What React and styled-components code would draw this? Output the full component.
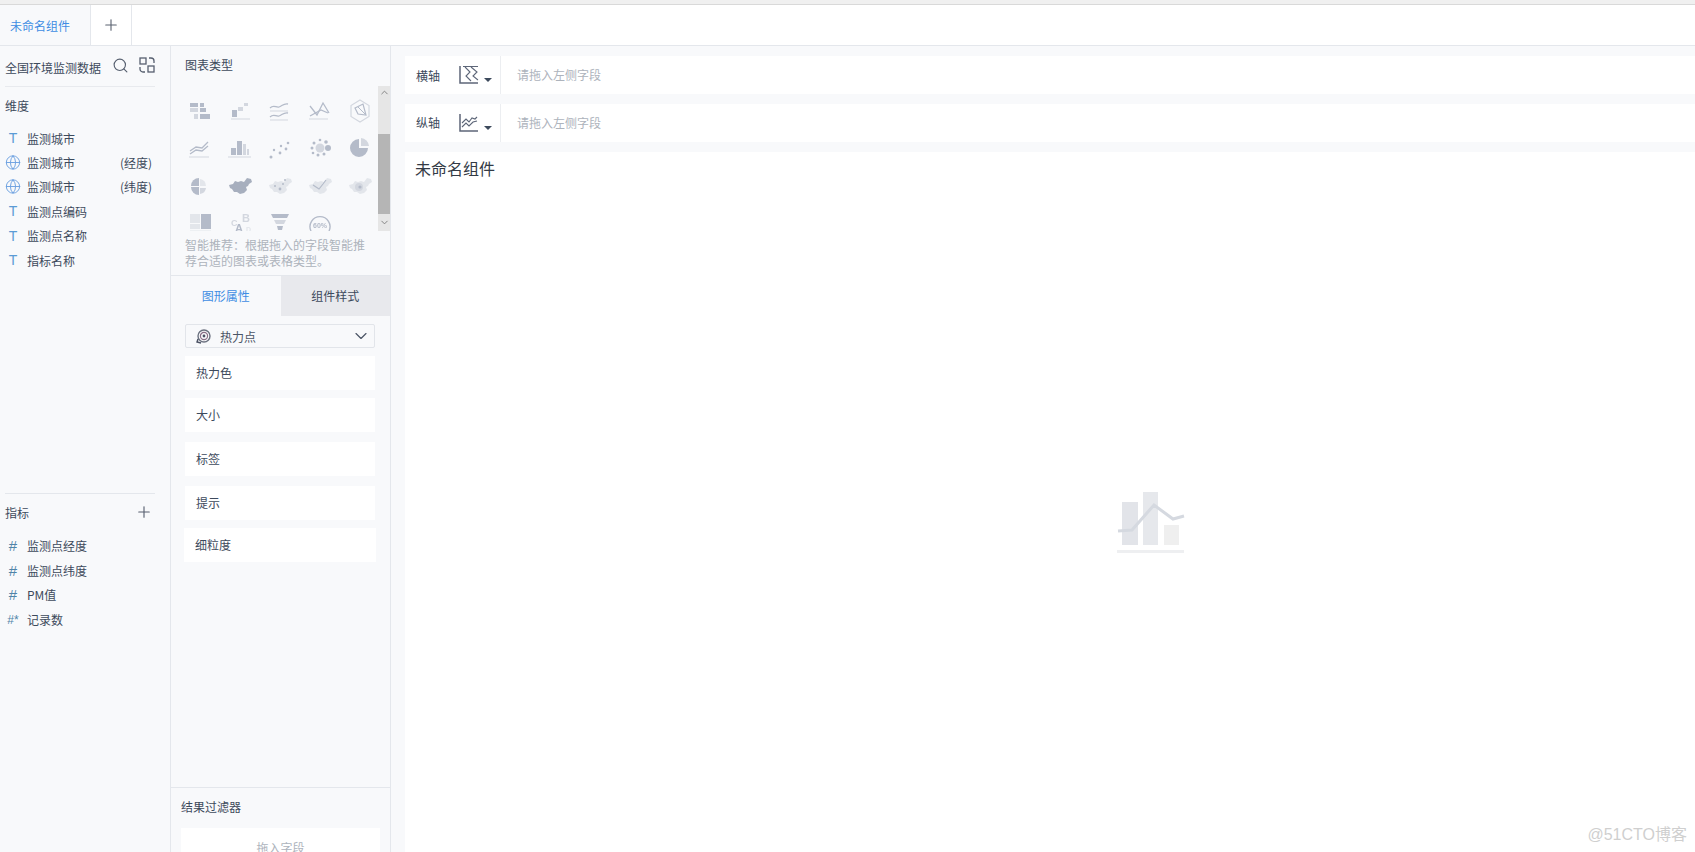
import React from "react";
import styled, { createGlobalStyle } from "styled-components";
import { Search, Globe, Plus, ChevronDown, ChevronUp } from "lucide-react";

const Global = createGlobalStyle`
  html, body { margin: 0; padding: 0; height: 100%; overflow: hidden; background: #fff; }
  body { font-family: "Noto Sans CJK SC", "Noto Sans", sans-serif; font-size: 12px; color: #3d4a5c; }
  * { box-sizing: border-box; }
`;

const Page = styled.div`
  width: 1695px; height: 852px; display: flex; flex-direction: column; overflow: hidden; position: relative;
`;
const TopStrip = styled.div`
  height: 5px; flex: none; background: #f0f0f0; border-bottom: 1px solid #d9d9d9;
`;
const TabBar = styled.div`
  height: 41px; flex: none; display: flex; background: #fff; border-bottom: 1px solid #e4e7ec;
`;
const Tab = styled.div`
  width: 91px; display: flex; align-items: center; padding-left: 10px; background: #f8f9fb;
  color: #3f8de3; border-right: 1px solid #e4e7ec;
`;
const AddTab = styled.div`
  width: 41px; display: flex; align-items: center; justify-content: center; color: #5b6270;
  border-right: 1px solid #e4e7ec;
`;
const Body = styled.div`
  flex: 1; min-height: 0; display: flex; background: #f8f9fb;
`;
const Left = styled.aside`
  width: 171px; flex: none; border-right: 1px solid #e4e7ec; display: flex; flex-direction: column;
`;
const DataHead = styled.div`
  height: 41px; margin: 0 15px 0 5px; flex: none; display: flex; align-items: center; justify-content: space-between;
  border-bottom: 1px solid #e8eaee; padding-top: 3px;
`;
const HeadIcons = styled.div`
  display: flex; align-items: center; gap: 10px; color: #565f6f; margin-top: -5px;
`;
const FieldSection = styled.section`
  height: ${p => p.$h}px; flex: none; padding-left: 5px;
`;
const SectionTitle = styled.div`
  height: 36px; display: flex; align-items: center; justify-content: space-between; padding-right: 17px;
  color: #3d4a5c;
`;
const FieldList = styled.div`
  padding-top: 3px;
`;
const FieldRow = styled.div`
  height: ${p => p.$h}px; display: flex; align-items: center; color: #3d4a5c; padding-right: 18px;
`;
const TypeMark = styled.span`
  width: 22px; flex: none; display: flex; justify-content: center; padding-right: 6px;
  font-family: "Liberation Sans", sans-serif; font-size: ${p => p.$size || 14}px; line-height: 1; color: ${p => p.$color};
`;
const FieldName = styled.span`
  flex: 1;
`;
const FieldNote = styled.span``;
const SectionDivider = styled.div`
  height: 1px; margin: 0 15px 0 5px; background: #e4e7ec; flex: none;
`;
const Middle = styled.aside`
  width: 220px; flex: none; border-right: 1px solid #e4e7ec; display: flex; flex-direction: column;
`;
const ChartHead = styled.div`
  height: 40px; flex: none; padding: 10px 14px 0; color: #3d4a5c;
`;
const ChartPicker = styled.div`
  height: 145px; flex: none; display: flex; overflow: hidden;
`;
const ChartGrid = styled.div`
  flex: 1; display: grid; grid-template-columns: repeat(5, 40px); grid-auto-rows: 37.5px;
  padding: 6px 0 0 9px; overflow: hidden; justify-items: center; align-items: center;
  filter: blur(0.35px);
`;
const Track = styled.div`
  width: 12px; flex: none; background: #e6e6e6; display: flex; flex-direction: column; align-items: center; color: #7d7d7d;
`;
const TrackEnd = styled.div`
  height: ${p => p.$h}px; flex: none; display: flex; align-items: ${p => (p.$top ? "flex-start" : "center")}; padding-top: ${p => (p.$top ? 1 : 0)}px;
`;
const Thumb = styled.div`
  width: 12px; height: 80px; flex: none; background: #b5b5b5;
`;
const Hint = styled.div`
  height: 45px; flex: none; padding: 6px 14px 0; color: #adb3bc; line-height: 16px; border-bottom: 1px solid #e4e7ec;
`;
const Tabs = styled.div`
  height: 40px; flex: none; display: flex;
`;
const AttrTab = styled.div`
  flex: 1; display: flex; align-items: center; justify-content: center; padding-bottom: 2px;
  color: ${p => (p.$active ? "#3f8de3" : "#3d4a5c")}; background: ${p => (p.$active ? "#f8f9fb" : "#e8e9ed")};
`;
const Attrs = styled.div`
  flex: 1; min-height: 0; padding: 8px 15px 0 14px; display: flex; flex-direction: column;
`;
const Select = styled.div`
  height: 24px; flex: none; border: 1px solid #e2e5ea; border-radius: 2px; display: flex; align-items: center;
  padding: 0 3px 0 10px; color: #4b5565; margin-bottom: 8px;
`;
const SelectLabel = styled.span`
  flex: 1; margin-left: 9px;
`;
const AttrCard = styled.div`
  height: 34px; flex: none; background: #fff; display: flex; align-items: center; padding-left: 11px; padding-bottom: 2px;
  color: #3d4a5c; margin-bottom: ${p => p.$gap}px; margin-inline: ${p => (p.$wide ? "-1px" : "0")};
`;
const Filter = styled.div`
  flex: none; height: 65px; border-top: 1px solid #e4e7ec; padding: 10px 10px 0;
`;
const FilterTitle = styled.div`
  height: 30px; color: #3d4a5c;
`;
const DropZone = styled.div`
  height: 60px; background: #fff; color: #adb3bc; text-align: center; padding-top: 11px;
`;
const Main = styled.main`
  flex: 1; min-width: 0; padding: 10px 0 0 14px; display: flex; flex-direction: column; gap: 10px;
`;
const AxisRow = styled.div`
  height: 38px; flex: none; background: #fff; display: flex; align-items: center; padding-left: 11px;
`;
const AxisLabel = styled.span`
  width: 43px; color: #3d4a5c; padding-bottom: ${p => (p.$lift ? 2 : 0)}px;
`;
const Caret = styled.span`
  width: 0; height: 0; margin: 9px 8px 0 5px; border: 4px solid transparent; border-top: 4px solid #3d4a5c; border-bottom: 0;
`;
const AxisSep = styled.span`
  width: 1px; height: 38px; background: #eceef1;
`;
const Placeholder = styled.span`
  margin-left: 16px; color: #adb3bc; padding-bottom: 2px;
`;
const Canvas = styled.section`
  flex: 1; min-height: 0; background: #fff; padding: 4px 10px; display: flex; flex-direction: column;
`;
const CanvasTitle = styled.div`
  font-size: 16px; line-height: 24px; color: #333a45;
`;
const Empty = styled.div`
  padding: 312px 0 0 702px;
`;
const Watermark = styled.div`
  position: absolute; right: 8px; bottom: 7px; font-family: "Liberation Sans", "Noto Sans CJK SC", sans-serif;
  font-size: 16px; color: #cfcfcf;
`;

const C = "#b4bbc9";
const L = "#d3d7df";
const P = "#e3e6eb";
const ChartIcon = ({ children }) => (
  <svg width="30" height="30" viewBox="0 0 30 30" fill="none">{children}</svg>
);
const CHINA = "M4 14l4-1 2-3 3 1 3-1 3 1 3-4 4 1 1 3-3 2-1 2-2 1 1 3-3 3-4 1-3-2h-3l-2-3-2-1z";
const chartIcons = [
  <><rect x="5" y="7" width="8" height="4" fill={C}/><rect x="15" y="7" width="4" height="4" fill={C}/><rect x="5" y="12" width="8" height="4" fill={L}/><rect x="15" y="12" width="6" height="4" fill={C}/><rect x="9" y="18" width="4" height="5" fill={L}/><rect x="15" y="18" width="10" height="5" fill={C}/></>,
  <><rect x="7" y="14" width="5" height="7" fill={C}/><rect x="13" y="11" width="5" height="4" fill={L}/><rect x="19" y="7" width="4" height="3" fill={L}/><path d="M6 23h19" stroke={L}/></>,
  <><path d="M5 12c4-4 6 0 9-1s5-4 9-3" stroke={C} strokeWidth="1.3"/><path d="M5 21c4-4 6 0 9-1s5-4 9-3" stroke={C} strokeWidth="1.3"/><path d="M5 15h18M5 24h18" stroke={L}/></>,
  <><path d="M5 10l7 9 6-12 6 10" stroke={C} strokeWidth="1.3"/><path d="M5 20l11-6 7 3" stroke={C} strokeWidth="1.3"/><path d="M4 23h19" stroke={L}/></>,
  <><path d="M15 4l9 5.5v11L15 26l-9-5.500v-11z" stroke={L} strokeWidth="1.2"/><path d="M10 12l8-4 3 11-8-1z" stroke={C} strokeWidth="1.2"/><path d="M13 11l7 7" stroke={C}/></>,
  <><path d="M5 18l6-4 6 1 6-6" stroke={C} strokeWidth="1.3"/><path d="M5 21l6-4 6 1 6-5" stroke={C} strokeWidth="1.3"/><path d="M4 24h20" stroke={L}/></>,
  <><rect x="6" y="15" width="5" height="7" fill={C}/><rect x="12" y="8" width="5" height="14" fill={C}/><rect x="18" y="11" width="3" height="11" fill={L}/><rect x="22" y="16" width="2" height="6" fill={L}/><path d="M3 24h23" stroke={L}/></>,
  <><g fill={C}><circle cx="6" cy="24" r="1.5"/><circle cx="9" cy="17" r="1.2"/><circle cx="15" cy="20" r="1.4"/><circle cx="16" cy="13" r="1.2"/><circle cx="21" cy="16" r="1.4"/><circle cx="23" cy="10" r="1.3"/></g></>,
  <><circle cx="15" cy="15" r="4.5" fill={L}/><g fill={C}><circle cx="7" cy="15" r="1.5"/><circle cx="9" cy="10" r="1.5"/><circle cx="15" cy="7" r="1.3"/><circle cx="21" cy="9" r="1.8"/><circle cx="23" cy="15" r="3"/><circle cx="19" cy="21" r="1.5"/><circle cx="13" cy="22" r="1.5"/><circle cx="8" cy="20" r="1.3"/></g></>,
  <><path d="M14 6a9 9 0 1 0 9 9h-9z" fill={C}/><path d="M16 5a9 9 0 0 1 8 8h-8z" fill={L}/></>,
  <><path d="M14 7a8 8 0 0 0-8 8h8z" fill={C}/><path d="M6 16a8 8 0 0 0 8 8v-8z" fill={C}/><path d="M15 8a7 7 0 0 1 6 7h-6z" fill={P}/><path d="M15 17h6a7 7 0 0 1-6 6z" fill={L}/></>,
  <path d={CHINA} fill="#a7afbe"/>,
  <><path d={CHINA} fill={P}/><g fill={C}><circle cx="10" cy="15" r="1"/><circle cx="15" cy="18" r="1.4"/><circle cx="18" cy="13" r="1"/><circle cx="20" cy="9" r="1"/></g></>,
  <><path d={CHINA} fill={P}/><path d="M8 14l6 4 4-5 3-4" stroke={C} strokeWidth="1.2"/></>,
  <><path d={CHINA} fill={P}/><circle cx="14" cy="16" r="4" fill={L}/><circle cx="15" cy="16" r="1.6" fill={C}/></>,
  <><rect x="5" y="6" width="10" height="9" fill={P}/><rect x="16" y="6" width="10" height="15" fill={C}/><rect x="5" y="16" width="10" height="5" fill={P}/><path d="M5 23h21" stroke={P}/></>,
  <><g fontFamily="Liberation Sans, sans-serif" fontWeight="700"><text x="6" y="18" fontSize="9" fill={L}>C</text><text x="17" y="14" fontSize="11" fill={L}>B</text><text x="10" y="24" fontSize="11" fill={C}>A</text><text x="21" y="24" fontSize="7" fill={P}>D</text></g></>,
  <><path d="M6 6h18l-2 4H8z" fill={C}/><path d="M9 12h12l-2 4h-8z" fill={L}/><path d="M12 18h6l-1 4h-4z" fill={C}/></>,
  <><path d="M6 23a10 10 0 1 1 18 0" stroke={C} strokeWidth="1.4"/><text x="15" y="20" textAnchor="middle" fontSize="7" fontWeight="700" fontFamily="Liberation Sans, sans-serif" fill={C}>60%</text></>,
];

const XAxisIcon = () => (
  <svg width="20" height="20" viewBox="0 0 20 20" fill="none" stroke="#5d6678" strokeWidth="1.5">
    <path d="M1 1v17h18" /><path d="M4 1.500h15M6 2l5 5-4 4 5 5M12 2l6 5-4 4 5 4" strokeWidth="1.1" />
  </svg>
);
const YAxisIcon = () => (
  <svg width="20" height="20" viewBox="0 0 20 20" fill="none" stroke="#5d6678" strokeWidth="1.5">
    <path d="M1 1v17h18" /><path d="M3 10l4-4 3 3 3-4 3 1 2-2M3 14l4-4 3 3 4-4 4-1" strokeWidth="1.1" />
  </svg>
);
const SwitchIcon = () => (
  <svg width="16" height="16" viewBox="0 0 16 16" fill="none" stroke="#565f6f" strokeWidth="1.3">
    <rect x="1" y="1" width="6" height="6" />
    <rect x="9" y="9" width="6" height="6" />
    <path d="M10 1h2a3 3 0 0 1 3 3v2" />
    <path d="M6 15H4a3 3 0 0 1-3-3v-2" />
  </svg>
);
const HeatIcon = () => (
  <svg width="15" height="15" viewBox="0 0 15 15" fill="none">
    <circle cx="8" cy="7" r="6" stroke="#6c7280" strokeWidth="1.4" />
    <circle cx="8" cy="7" r="3.6" stroke="#8a6f86" strokeWidth="1.2" />
    <circle cx="8" cy="7" r="1.4" fill="#4a5163" />
    <path d="M2 10l-1 3 4 1" stroke="#4a5163" strokeWidth="1.4" />
  </svg>
);
const EmptyIcon = () => (
  <svg width="68" height="64" viewBox="0 0 68 64" style={{ display: "block" }}>
    <rect x="5" y="10" width="16" height="43" fill="#e2e4e9" />
    <rect x="26" y="0" width="15" height="53" fill="#e6e8ec" />
    <rect x="47" y="33" width="15" height="20" fill="#efefef" />
    <path d="M1 39l14-1 22-25 19 14 11-3" fill="none" stroke="#d5d9e0" strokeWidth="3" />
    <rect x="0" y="58" width="67" height="3" fill="#eeeff1" />
  </svg>
);

const blue = "#5b9bd5";
const dims = [
  { t: "T", name: "监测城市" },
  { g: true, name: "监测城市", note: "(经度)" },
  { g: true, name: "监测城市", note: "(纬度)" },
  { t: "T", name: "监测点编码" },
  { t: "T", name: "监测点名称" },
  { t: "T", name: "指标名称" },
];
const metrics = [
  { t: "#", name: "监测点经度" },
  { t: "#", name: "监测点纬度" },
  { t: "#", name: "PM值" },
  { t: "#*", name: "记录数", small: true },
];
const attrs = [
  { name: "热力色", gap: 8 },
  { name: "大小", gap: 10 },
  { name: "标签", gap: 10 },
  { name: "提示", gap: 8 },
  { name: "细粒度", gap: 0, wide: true },
];

export default function App() {
  return (
    <Page>
      <Global />
      <TopStrip />
      <TabBar>
        <Tab>未命名组件</Tab>
        <AddTab><Plus size={18} strokeWidth={1.5} /></AddTab>
      </TabBar>
      <Body>
        <Left>
          <DataHead>
            <span>全国环境监测数据</span>
            <HeadIcons><Search size={17} strokeWidth={1.6} /><SwitchIcon /></HeadIcons>
          </DataHead>
          <FieldSection $h={406}>
            <SectionTitle>维度</SectionTitle>
            <FieldList>
              {dims.map((d, i) => (
                <FieldRow key={i} $h={24.4}>
                  <TypeMark $color={blue}>{d.g ? <Globe size={17} strokeWidth={1.4} color="#6a9fe0" /> : d.t}</TypeMark>
                  <FieldName>{d.name}</FieldName>
                  {d.note && <FieldNote>{d.note}</FieldNote>}
                </FieldRow>
              ))}
            </FieldList>
          </FieldSection>
          <SectionDivider />
          <FieldSection $h={200}>
            <SectionTitle>指标<Plus size={18} strokeWidth={1.5} color="#565f6f" /></SectionTitle>
            <FieldList>
              {metrics.map((m, i) => (
                <FieldRow key={i} $h={24.8}>
                  <TypeMark $color="#4f84a8" $size={m.small ? 12 : 15}>{m.t}</TypeMark>
                  <FieldName>{m.name}</FieldName>
                </FieldRow>
              ))}
            </FieldList>
          </FieldSection>
        </Left>
        <Middle>
          <ChartHead>图表类型</ChartHead>
          <ChartPicker>
            <ChartGrid>
              {chartIcons.map((ic, i) => <ChartIcon key={i}>{ic}</ChartIcon>)}
            </ChartGrid>
            <Track>
              <TrackEnd $h={48} $top><ChevronUp size={11} /></TrackEnd>
              <Thumb />
              <TrackEnd $h={17}><ChevronDown size={11} /></TrackEnd>
            </Track>
          </ChartPicker>
          <Hint>智能推荐：根据拖入的字段智能推<br />荐合适的图表或表格类型。</Hint>
          <Tabs>
            <AttrTab $active>图形属性</AttrTab>
            <AttrTab>组件样式</AttrTab>
          </Tabs>
          <Attrs>
            <Select>
              <HeatIcon />
              <SelectLabel>热力点</SelectLabel>
              <ChevronDown size={20} strokeWidth={1.4} color="#4b5565" />
            </Select>
            {attrs.map(a => <AttrCard key={a.name} $gap={a.gap} $wide={a.wide}>{a.name}</AttrCard>)}
          </Attrs>
          <Filter>
            <FilterTitle>结果过滤器</FilterTitle>
            <DropZone>拖入字段</DropZone>
          </Filter>
        </Middle>
        <Main>
          <AxisRow>
            <AxisLabel>横轴</AxisLabel>
            <XAxisIcon /><Caret /><AxisSep />
            <Placeholder>请拖入左侧字段</Placeholder>
          </AxisRow>
          <AxisRow>
            <AxisLabel $lift>纵轴</AxisLabel>
            <YAxisIcon /><Caret /><AxisSep />
            <Placeholder>请拖入左侧字段</Placeholder>
          </AxisRow>
          <Canvas>
            <CanvasTitle>未命名组件</CanvasTitle>
            <Empty><EmptyIcon /></Empty>
          </Canvas>
        </Main>
      </Body>
      <Watermark>@51CTO博客</Watermark>
    </Page>
  );
}
